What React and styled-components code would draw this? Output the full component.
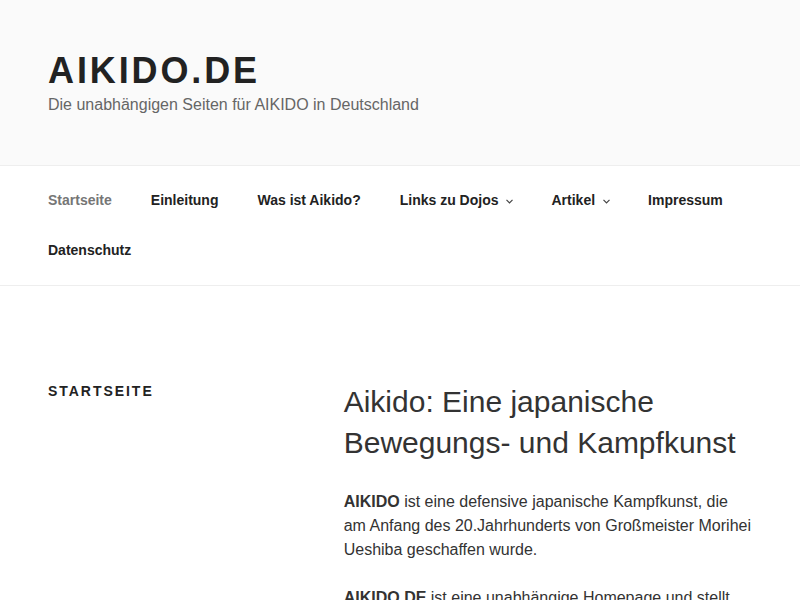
import React from "react";
import styled, { createGlobalStyle } from "styled-components";

const Global = createGlobalStyle`
    html, body {
        margin: 0;
        padding: 0;
        background: #fff;
        font-family: "Liberation Sans", Arial, sans-serif;
        color: #333;
    }
`;

const Header = styled.header`
    background: #fafafa;
    padding: 48px 48px 48px;
`;

const SiteTitle = styled.h1`
    margin: 0;
    font-size: 36px;
    line-height: 45px;
    font-weight: 700;
    letter-spacing: 0.08em;
    text-transform: uppercase;
    color: #222;
`;

const Tagline = styled.p`
    margin: 0;
    font-size: 16px;
    line-height: 24px;
    color: #666;
`;

const Nav = styled.nav`
    border-top: 1px solid #eee;
    border-bottom: 1px solid #eee;
    padding: 9.5px 48px 9.5px;
`;

const Menu = styled.ul`
    list-style: none;
    margin: 0 0 0 -19.5px;
    padding: 0;
    display: flex;
    flex-wrap: wrap;
`;

const Item = styled.li`
    display: flex;
    align-items: center;
    padding: 14.5px 19.5px;
    font-size: 14px;
    line-height: 21px;
    font-weight: 700;
    color: ${(p) => (p.$current ? "#767676" : "#222")};
`;

const Chevron = styled.svg`
    width: 7px;
    height: 5px;
    margin-left: 8px;
    margin-right: -1px;
    margin-top: 1px;
`;

const Content = styled.main`
    padding: 95px 48px 0;
    display: flex;
    justify-content: space-between;
`;

const Side = styled.div`
    width: 36%;
`;

const PageLabel = styled.h2`
    margin: 0;
    font-size: 14px;
    line-height: 21px;
    font-weight: 700;
    letter-spacing: 0.14em;
    text-transform: uppercase;
    color: #222;
`;

const Primary = styled.div`
    width: 58%;
`;

const Title = styled.h2`
    margin: 0 0 27px;
    font-size: 30px;
    line-height: 41px;
    font-weight: 400;
    color: #333;
`;

const Para = styled.p`
    margin: 0 0 24px;
    font-size: 16px;
    line-height: 24px;
    color: #333;
`;

const menu = [
    { label: "Startseite", current: true },
    { label: "Einleitung" },
    { label: "Was ist Aikido?" },
    { label: "Links zu Dojos", sub: true },
    { label: "Artikel", sub: true },
    { label: "Impressum" },
    { label: "Datenschutz" },
];

const App = () => {
    return (
        <>
            <Global />
            <Header>
                <SiteTitle>AIKIDO.DE</SiteTitle>
                <Tagline>Die unabhängigen Seiten für AIKIDO in Deutschland</Tagline>
            </Header>
            <Nav>
                <Menu>
                    {menu.map((m) => (
                        <Item key={m.label} $current={m.current}>
                            {m.label}
                            {m.sub && (
                                <Chevron viewBox="0 0 7 5">
                                    <path d="M0.5 0.8 L3.5 3.8 L6.5 0.8" fill="none" stroke="#444" strokeWidth="1.2" />
                                </Chevron>
                            )}
                        </Item>
                    ))}
                </Menu>
            </Nav>
            <Content>
                <Side>
                    <PageLabel>Startseite</PageLabel>
                </Side>
                <Primary>
                    <Title>Aikido: Eine japanische Bewegungs- und Kampfkunst</Title>
                    <Para>
                        <strong>AIKIDO</strong> ist eine defensive japanische Kampfkunst, die am Anfang des
                        20.Jahrhunderts von Großmeister Morihei Ueshiba geschaffen wurde.
                    </Para>
                    <Para>
                        <strong>AIKIDO.DE</strong> ist eine unabhängige Homepage und stellt Informationen
                        über Aikido in Deutschland zur Verfügung.
                    </Para>
                </Primary>
            </Content>
        </>
    );
};

export default App;
